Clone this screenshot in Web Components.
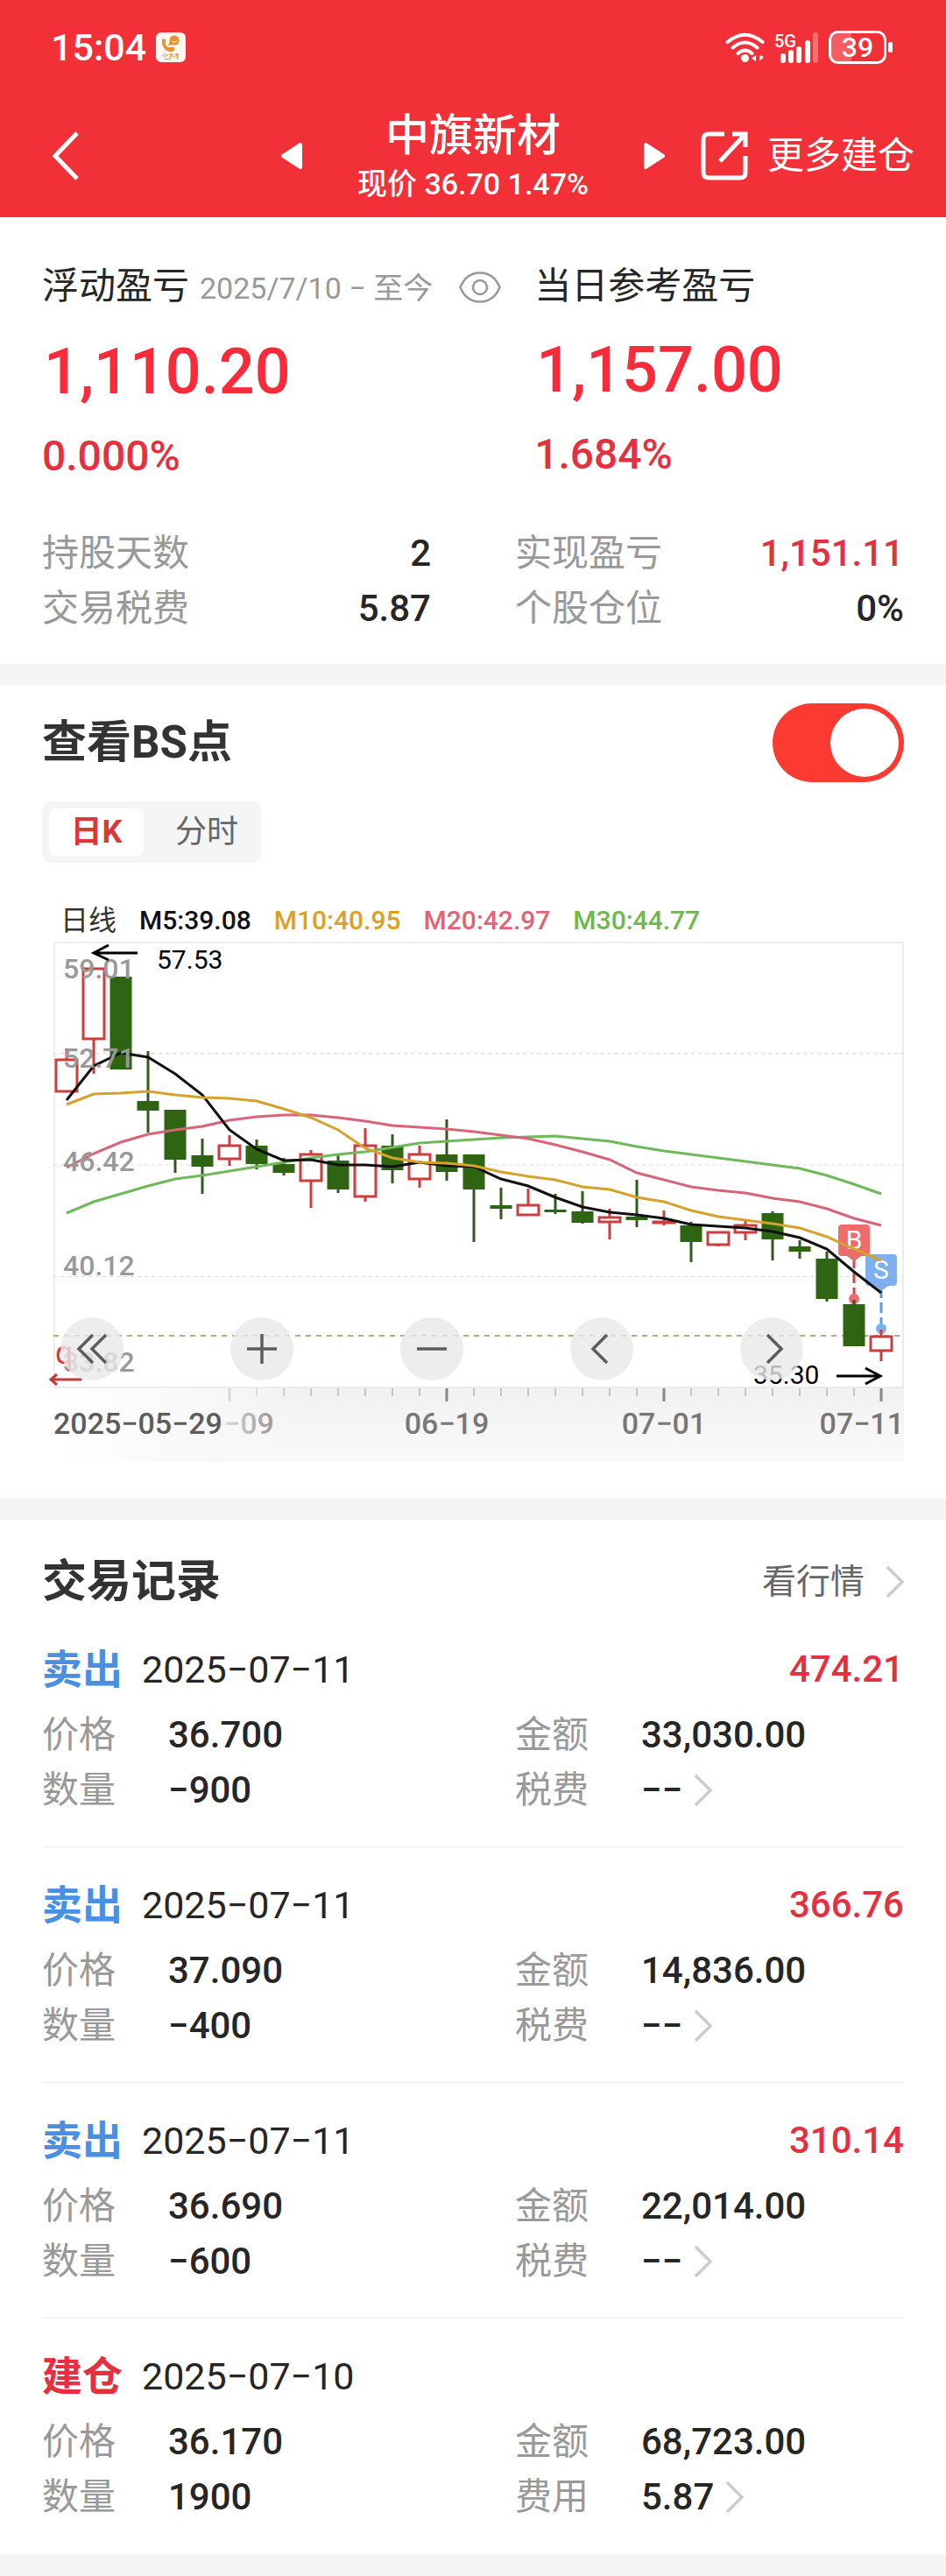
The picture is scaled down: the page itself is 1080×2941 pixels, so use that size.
<!DOCTYPE html>
<html lang="zh-CN">
<head>
<meta charset="utf-8">
<meta name="viewport" content="width=device-width, initial-scale=1">
<title>中旗新材</title>
<style>
  body {
    --red: #f23038;
    --up: #e5303f;
    --ink: #262626;
    --muted: #999;
    --gutter: 48px;
    margin: 0;
    background: #f4f4f4;
    color: var(--ink);
    font-family: Roboto, "Noto Sans CJK SC", sans-serif;
    font-size: 42px;
  }
  main {
    display: flex;
    flex-direction: column;
    gap: 24px;
  }
</style>
</head>
<body>
<status-bar time="15:04" battery="39"></status-bar>
<stock-header name="中旗新材">现价 36.70 1.47%</stock-header>
<main>
  <profit-summary>
    <profit-figure label="浮动盈亏" range="2025/7/10 − 至今" value="1,110.20" percent="0.000%"></profit-figure>
    <profit-figure label="当日参考盈亏" value="1,157.00" percent="1.684%"></profit-figure>
    <stat-item slot="stats" label="持股天数">2</stat-item>
    <stat-item slot="stats" label="实现盈亏" up>1,151.11</stat-item>
    <stat-item slot="stats" label="交易税费">5.87</stat-item>
    <stat-item slot="stats" label="个股仓位">0%</stat-item>
  </profit-summary>
  <bs-panel>
    <k-chart></k-chart>
  </bs-panel>
  <trade-list>
    <trade-record type="卖出" date="2025−07−11" profit="474.21" price="36.700" amount="33,030.00" count="−900" fee-label="税费" fee="−−"></trade-record>
    <trade-record type="卖出" date="2025−07−11" profit="366.76" price="37.090" amount="14,836.00" count="−400" fee-label="税费" fee="−−"></trade-record>
    <trade-record type="卖出" date="2025−07−11" profit="310.14" price="36.690" amount="22,014.00" count="−600" fee-label="税费" fee="−−"></trade-record>
    <trade-record type="建仓" open date="2025−07−10" price="36.170" amount="68,723.00" count="1900" fee-label="费用" fee="5.87"></trade-record>
  </trade-list>
</main>

<script>
class BaseElement extends HTMLElement {
  connectedCallback() {
    if (this.shadowRoot) return;
    this.attachShadow({mode: 'open'});
    const template = document.createElement('template');
    template.innerHTML = this.render();
    this.shadowRoot.appendChild(template.content.cloneNode(true));
  }

  attr(name) {
    return this.getAttribute(name) || '';
  }
}

const resets = `
  *, *::before { box-sizing: border-box; }
  button { border: 0; padding: 0; background: none; color: inherit; font: inherit; cursor: pointer; }
  a { color: inherit; text-decoration: none; }
  h1, h2, p, dl, dd { margin: 0; font-size: inherit; font-weight: inherit; }
  svg { display: block; flex: none; }
`;

const chevron = `
  <svg width="20" height="36" viewBox="0 0 20 36" fill="none" stroke="#ccc" stroke-width="3.5" aria-hidden="true">
    <path d="M1 1l17 17L1 35"/>
  </svg>
`;

class StatusBar extends BaseElement {
  render() {
    return `
      <style>
        ${resets}
        :host {
          display: flex;
          align-items: center;
          justify-content: space-between;
          height: 108px;
          padding: 0 60px 0 58px;
          box-sizing: border-box;
          background: var(--red);
          color: #fff;
          font-weight: 500;
        }
        div { display: flex; align-items: center; gap: 11px; }
        .time { font-size: 43px; line-height: 54px; }
        svg text { font-family: Roboto, sans-serif; fill: #fff; }
      </style>
      <div>
        <span class="time">${this.attr('time')}</span>
        <svg width="34" height="34" viewBox="0 0 34 34">
          <rect width="34" height="34" rx="6" fill="#fbf6f2"/>
          <circle cx="21" cy="9" r="5.5" fill="#e8912d"/>
          <path d="M16 10l-2 5 5-1z" fill="#e8912d"/>
          <path d="M18 10q3 2.500 6 0" fill="none" stroke="#fff"/>
          <path d="M7 8c2-2 4 0 4 2s-1 2 0 4 2 3 4 3 5-1 6 1-1 4-4 4C11 22 6 16 7 8z" fill="#e8912d"/>
          <path d="M7 27l1-1m2-2v5m2-4l2 2m1-2h5m-2.500-1v2l-2 3m2-3l3 3m1-4h4m-1-1v6m0-5l-3 3M10 31q5-1 7-1" fill="none" stroke="#d98a35"/>
        </svg>
      </div>
      <div>
        <svg width="45" height="36" viewBox="0 0 45 36" fill="none" stroke="#fff" stroke-width="4" stroke-linecap="round">
          <path d="M2.500 12q20-16.500 40 0M8.500 18.500q14-12 28 0M14.500 25q8-7 16 0"/>
          <circle cx="22.500" cy="30.500" r="4.500" fill="#fff" stroke="none"/>
          <path d="M35 27v7l-5-3.500zM39 27v7l5-5z" fill="#fff" stroke="none"/>
        </svg>
        <svg width="51" height="36" viewBox="0 0 51 36" fill="#fff">
          <text x="0" y="18" font-size="20" font-weight="500">5G</text>
          <rect x="7" y="25" width="6" height="11" rx="3"/>
          <rect x="16" y="21" width="6" height="15" rx="3"/>
          <rect x="25" y="17" width="6" height="19" rx="3"/>
          <rect x="35" y="10" width="6" height="26" rx="3"/>
          <rect x="44" y="1" width="6" height="35" rx="3" opacity=".3"/>
        </svg>
        <svg width="74" height="38" viewBox="0 0 74 38">
          <path d="M10 2h16v34H10a8 8 0 0 1-8-8V10a8 8 0 0 1 8-8z" fill="#fff" opacity=".22"/>
          <rect x="1.500" y="1.500" width="63" height="35" rx="9" fill="none" stroke="#fff" stroke-width="3"/>
          <rect x="68" y="13" width="5" height="12" rx="2" fill="#fff"/>
          <text x="33" y="30" font-size="32" font-weight="500" text-anchor="middle">${this.attr('battery')}</text>
        </svg>
      </div>
    `;
  }
}

class StockHeader extends BaseElement {
  render() {
    return `
      <style>
        ${resets}
        :host {
          display: grid;
          grid-template-columns: 1fr 438px 1fr;
          align-items: center;
          height: 140px;
          padding: 0 36px;
          box-sizing: border-box;
          background: var(--red);
          color: #fff;
        }
        .back { justify-self: start; padding: 0 24px; }
        .stock { display: flex; align-items: center; justify-content: space-between; }
        .title { padding-top: 4px; text-align: center; font-weight: 500; }
        h1 { font-size: 50px; line-height: 60px; }
        p { font-size: 34px; line-height: 50px; }
        .more { justify-self: end; display: flex; align-items: center; gap: 22px; line-height: 54px; white-space: nowrap; }
      </style>
      <button class="back" aria-label="返回">
        <svg width="30" height="56" viewBox="0 0 30 56" fill="none" stroke="#fff" stroke-width="5"><path d="M28 2L3 28l25 26"/></svg>
      </button>
      <div class="stock">
        <button aria-label="上一只">
          <svg width="24" height="32" viewBox="0 0 24 32" fill="#fff" stroke="#fff" stroke-width="4" stroke-linejoin="round"><path d="M22 3v26L2 16z"/></svg>
        </button>
        <div class="title">
          <h1>${this.attr('name')}</h1>
          <p><slot></slot></p>
        </div>
        <button aria-label="下一只">
          <svg width="24" height="32" viewBox="0 0 24 32" fill="#fff" stroke="#fff" stroke-width="4" stroke-linejoin="round"><path d="M2 3v26l20-13z"/></svg>
        </button>
      </div>
      <a class="more" href="#more">
        <svg width="54" height="56" viewBox="0 0 54 56" fill="none" stroke="#fff" stroke-width="5">
          <path d="M27 3H9q-6 0-6 6v38q0 6 6 6h36q6 0 6-6V28M36 3h15v15M50 4L22 34"/>
        </svg>
        更多建仓
      </a>
    `;
  }
}

class ProfitSummary extends BaseElement {
  render() {
    return `
      <style>
        :host { display: block; padding: 49px var(--gutter) 32px; background: #fff; }
        .figures { display: flex; gap: 38px; }
        .stats { display: grid; grid-template-columns: 1fr 1fr; column-gap: 96px; margin-top: 49px; }
      </style>
      <div class="figures"><slot></slot></div>
      <div class="stats"><slot name="stats"></slot></div>
    `;
  }
}

class ProfitFigure extends BaseElement {
  render() {
    const range = this.attr('range');
    return `
      <style>
        ${resets}
        :host { display: block; white-space: nowrap; }
        .head { display: flex; align-items: baseline; gap: 12px; line-height: 60px; }
        .head span { color: var(--muted); font-size: 34px; }
        .head button { align-self: center; margin-left: 18px; }
        p { color: var(--up); font-weight: 500; }
        .value { margin: 26px 0 26px 2px; color: #f82b3a; font-size: 72px; line-height: 80px; }
        .percent { font-size: 48px; line-height: 60px; }
      </style>
      <div class="head">
        <h2>${this.attr('label')}</h2>
        ${range && `
        <span>${range}</span>
        <button aria-label="隐藏金额">
          <svg width="48" height="36" viewBox="0 0 48 36" fill="none" stroke="#999" stroke-width="2.500">
            <path d="M1.500 18C6 7 14 1.500 24 1.500S42 7 46.500 18C42 29 34 34.500 24 34.500S6 29 1.500 18z"/>
            <circle cx="24" cy="18" r="8"/>
          </svg>
        </button>`}
      </div>
      <p class="value">${this.attr('value')}</p>
      <p class="percent">${this.attr('percent')}</p>
    `;
  }
}

class StatItem extends BaseElement {
  render() {
    return `
      <style>
        :host { display: flex; justify-content: space-between; line-height: 63px; }
        .label { color: var(--muted); }
        .value { font-weight: 500; }
        :host([up]) .value { color: var(--up); }
      </style>
      <span class="label">${this.attr('label')}</span>
      <span class="value"><slot></slot></span>
    `;
  }
}

class BsPanel extends BaseElement {
  render() {
    return `
      <style>
        ${resets}
        :host { display: block; padding: 21px var(--gutter) 42px; background: #fff; }
        .switch { display: flex; justify-content: space-between; color: #333; font-size: 51px; font-weight: 700; line-height: 90px; }
        input {
          appearance: none;
          display: flex;
          align-items: center;
          width: 150px;
          height: 90px;
          margin: 0;
          padding: 6px;
          border-radius: 45px;
          background: #ccc;
        }
        input::before { content: ""; width: 78px; height: 78px; border-radius: 50%; background: #fff; }
        input:checked { justify-content: flex-end; background: #fb3b31; }
        .tabs {
          display: inline-flex;
          margin-top: 22px;
          padding: 8px;
          border-radius: 10px;
          background: #f5f5f5;
        }
        .tabs button {
          min-width: 108px;
          padding: 0 24px;
          border-radius: 8px;
          color: #666;
          font-size: 36px;
          line-height: 54px;
        }
        .tabs button + button { padding: 0 18px 0 36px; }
        .tabs [aria-selected=true] { background: #fff; color: #d93838; font-weight: 700; }
        .legend {
          display: flex;
          gap: 26px;
          margin-top: 46px;
          padding-left: 21px;
          font-size: 30px;
          font-weight: 500;
          line-height: 40px;
        }
        .legend span:first-child { color: #333; font-size: 32px; font-weight: 400; }
        .m5 { color: #111; }
        .m10 { color: #dca024; }
        .m20 { color: #de6478; }
        .m30 { color: #6fb74f; }
      </style>
      <div class="switch">
        <label for="bs">查看BS点</label>
        <input id="bs" type="checkbox" role="switch" checked>
      </div>
      <div class="tabs" role="tablist">
        <button role="tab" aria-selected="true">日K</button>
        <button role="tab" aria-selected="false">分时</button>
      </div>
      <div class="legend">
        <span>日线</span>
        <span class="m5">M5:39.08</span>
        <span class="m10">M10:40.95</span>
        <span class="m20">M20:42.97</span>
        <span class="m30">M30:44.77</span>
      </div>
      <slot></slot>
    `;
  }
}

// [up, body top, body bottom, high, low], in plot units from the top edge
const candles = [
  [1, 134, 170, 121, 170], [1, 30, 110, 30, 150], [0, 39, 145, 39, 145],
  [0, 181, 192, 124, 217], [0, 191, 248, 191, 263], [0, 243, 256, 224, 287],
  [1, 232, 247, 220, 255], [0, 232, 253, 225, 259], [0, 253, 263, 246, 266],
  [1, 242, 272, 237, 303], [0, 249, 282, 243, 286], [1, 232, 290, 212, 296],
  [0, 232, 260, 219, 275], [1, 242, 270, 232, 280], [0, 242, 262, 202, 272],
  [0, 242, 282, 242, 342], [0, 300, 304, 280, 316], [1, 300, 311, 281, 311],
  [0, 305, 308, 287, 310], [0, 307, 320, 284, 321], [1, 314, 319, 304, 339],
  [0, 313, 317, 271, 325], [1, 319, 320, 306, 323], [0, 323, 342, 319, 365],
  [1, 331, 345, 331, 347], [1, 323, 331, 318, 340], [0, 309, 339, 307, 363],
  [0, 347, 353, 340, 361], [0, 361, 407, 353, 410], [0, 413, 461, 408, 461],
  [1, 450, 466, 442, 478]
];

const averages = {
  '#6fb95a': [309, 296, 287, 278, 270, 266, 261, 256, 251, 246, 242, 239, 234, 229, 227, 225, 223, 222, 221, 224, 227, 233, 238, 242, 246, 250, 254, 258, 266, 276, 287],
  '#d6657a': [257, 241, 228, 219, 214, 210, 203, 199, 197, 197, 200, 204, 209, 211, 213, 216, 220, 224, 231, 239, 248, 263, 271, 279, 283, 286, 292, 296, 304, 315, 323],
  '#111': [180, 141, 126, 131, 150, 174, 214, 236, 249, 248, 254, 254, 256, 251, 255, 256, 270, 278, 291, 302, 308, 311, 315, 322, 324, 326, 330, 337, 350, 376, 400],
  '#d5a12f': [185, 173, 172, 170, 174, 177, 178, 181, 190, 200, 214, 235, 246, 251, 252, 255, 262, 267, 271, 279, 282, 291, 296, 306, 313, 317, 321, 326, 336, 350, 363]
};

const STEP = 31;
const xAt = i => 15 + i * STEP;

class KChart extends BaseElement {
  candles() {
    return candles.map(([up, top, bottom, high, low], i) => {
      const x = xAt(i);
      return up
        ? `<path d="M${x} ${high}V${top}M${x} ${bottom}V${low}M${x - 12} ${top}h24V${bottom}h-24z" fill="none" stroke="#c93f3f" stroke-width="3"/>`
        : `<path d="M${x} ${high}V${low}" stroke="#34591f" stroke-width="3"/>
           <rect x="${x - 12.5}" y="${top}" width="25" height="${bottom - top}" fill="#2f6413"/>`;
    }).join('');
  }

  lines() {
    return Object.entries(averages).map(([color, ys]) =>
      `<polyline points="${ys.map((y, i) => `${xAt(i)},${y}`).join(' ')}" fill="none" stroke="${color}" stroke-width="3"/>`
    ).join('');
  }

  ticks() {
    return candles.map((_, i) => i < 6 ? '' : (i - 6) % 8 === 0
      ? `<path d="M${xAt(i)} 509v15" stroke="#888" stroke-width="3"/>`
      : `<path d="M${xAt(i)} 509v9" stroke="#c4c4c4" stroke-width="2"/>`
    ).join('');
  }

  marker(letter, i, y, fill, line) {
    const x = xAt(i);
    return `
      <path d="M${x} ${y + 38}V${y + 85}" stroke="${line}" stroke-width="3" stroke-dasharray="12 5"/>
      <path d="M${x - 8} ${y + 36}h16l-8 6z" fill="${fill}"/>
      <rect x="${x - 18}" y="${y}" width="36" height="36" rx="4" fill="${fill}"/>
      <circle cx="${x}" cy="${y + 85}" r="6" fill="${fill}"/>
      <text x="${x}" y="${y + 28}" font-size="30" fill="#fff" text-anchor="middle">${letter}</text>
    `;
  }

  render() {
    return `
      <style>
        ${resets}
        :host { display: block; position: relative; }
        .plot { width: 100%; height: auto; }
        .plot text { font-family: Roboto, "Noto Sans CJK SC", sans-serif; }
        .tools {
          position: absolute;
          inset: 433px 115px auto 21px;
          display: flex;
          justify-content: space-between;
        }
        .tools button {
          width: 72px;
          height: 72px;
          display: grid;
          place-items: center;
          border-radius: 50%;
          background: rgba(232, 232, 232, .8);
        }
      </style>
      <svg class="plot" viewBox="-13 -5 984 598" role="img" aria-label="日K线">
        <defs>
          <linearGradient id="shade" x2="0" y2="1">
            <stop stop-color="#f1f1f1"/>
            <stop offset="1" stop-color="#fafafa"/>
          </linearGradient>
          <linearGradient id="fade">
            <stop stop-color="#fff"/>
            <stop offset=".6" stop-color="#f8f8f8"/>
            <stop offset="1" stop-color="#f8f8f8" stop-opacity="0"/>
          </linearGradient>
        </defs>
        <rect x="0" y="509" width="971" height="84" fill="url(#shade)"/>
        <rect x="1" y="0" width="969" height="508" fill="none" stroke="#ececec" stroke-width="2"/>
        <path d="M0 126.500h970M0 254h970M0 381.500h970" stroke="#ddd" stroke-dasharray="4 4"/>
        <path d="M0 449h970" stroke="#bda678" stroke-width="2" stroke-dasharray="6 6"/>
        ${this.marker('B', 29, 322, '#ee6c6c', '#d64545')}
        ${this.marker('S', 30, 356, '#7eb0ef', '#5b9be0')}
        ${this.candles()}
        ${this.lines()}
        <g font-size="32" font-weight="500" fill="#999">
          <text x="11" y="41">59.01</text>
          <text x="11" y="143">52.71</text>
          <text x="11" y="261">46.42</text>
          <text x="11" y="380">40.12</text>
          <text x="11" y="490">33.82</text>
        </g>
        <g font-size="30">
          <text x="118" y="30">57.53</text>
          <text x="799" y="504">35.30</text>
        </g>
        <path d="M96 12H46M63 3L46 12l17 8M894 495h50M927 486l17 9-17 9" fill="none" stroke="#000" stroke-width="3"/>
        <text x="2" y="481" font-size="36" fill="#d93838">q</text>
        <path d="M32 499H-3M4 493l-7 6 7 6" fill="none" stroke="#c23a3a" stroke-width="3"/>
        ${this.ticks()}
        <g font-size="34" font-weight="500" fill="#777">
          <text x="194" y="561">−09</text>
          <text x="449" y="561" text-anchor="middle">06−19</text>
          <text x="697" y="561" text-anchor="middle">07−01</text>
          <text x="971" y="561" text-anchor="end">07−11</text>
        </g>
        <rect x="0" y="509" width="280" height="84" fill="url(#fade)"/>
        <text x="0" y="561" font-size="34" font-weight="500" fill="#5c5c5c">2025−05−29</text>
      </svg>
      <div class="tools">
        ${this.tool('最早', 'M19 2L3 18l16 16M34 2L18 18l16 16')}
        ${this.tool('放大', 'M18 1v34M1 18h34')}
        ${this.tool('缩小', 'M1 18h34')}
        ${this.tool('向左', 'M24 2L8 18l16 16')}
        ${this.tool('向右', 'M13 2l16 16-16 16')}
      </div>
    `;
  }

  tool(label, path) {
    return `
      <button aria-label="${label}">
        <svg width="36" height="36" viewBox="0 0 36 36" fill="none" stroke="#5c5c5c" stroke-width="3.500"><path d="${path}"/></svg>
      </button>
    `;
  }
}

class TradeList extends BaseElement {
  render() {
    return `
      <style>
        ${resets}
        :host { display: block; padding: 37px var(--gutter) 0; background: #fff; }
        header { display: flex; align-items: center; justify-content: space-between; line-height: 68px; }
        h2 { color: #333; font-size: 51px; font-weight: 700; }
        a { display: flex; align-items: center; gap: 25px; color: #666; font-size: 39px; }
      </style>
      <header>
        <h2>交易记录</h2>
        <a href="#quote">看行情${chevron}</a>
      </header>
      <slot></slot>
    `;
  }
}

class TradeRecord extends BaseElement {
  render() {
    return `
      <style>
        ${resets}
        :host { display: block; padding: 36px 0 33px; border-bottom: 1px solid #ececec; }
        :host(:last-of-type) { border-color: transparent; }
        .head { display: flex; align-items: center; gap: 22px; margin-bottom: 13px; line-height: 60px; }
        .type { color: #4a90e2; font-size: 46px; font-weight: 700; }
        :host([open]) .type { color: var(--up); }
        .date { font-size: 43px; }
        .profit { margin-left: auto; color: var(--up); font-weight: 500; }
        dl { display: grid; grid-template-columns: 1fr 1fr; column-gap: 96px; line-height: 63px; }
        dl div { display: flex; }
        dt { width: 144px; color: var(--muted); }
        dd, a { display: flex; align-items: center; gap: 14px; }
        dd { font-weight: 500; }
      </style>
      <div class="head">
        <span class="type">${this.attr('type')}</span>
        <span class="date">${this.attr('date')}</span>
        <span class="profit">${this.attr('profit')}</span>
      </div>
      <dl>
        <div><dt>价格</dt><dd>${this.attr('price')}</dd></div>
        <div><dt>金额</dt><dd>${this.attr('amount')}</dd></div>
        <div><dt>数量</dt><dd>${this.attr('count')}</dd></div>
        <div><dt>${this.attr('fee-label')}</dt><dd><a href="#fee">${this.attr('fee')}${chevron}</a></dd></div>
      </dl>
    `;
  }
}

customElements.define('status-bar', StatusBar);
customElements.define('stock-header', StockHeader);
customElements.define('profit-summary', ProfitSummary);
customElements.define('profit-figure', ProfitFigure);
customElements.define('stat-item', StatItem);
customElements.define('bs-panel', BsPanel);
customElements.define('k-chart', KChart);
customElements.define('trade-list', TradeList);
customElements.define('trade-record', TradeRecord);
</script>
</body>
</html>
